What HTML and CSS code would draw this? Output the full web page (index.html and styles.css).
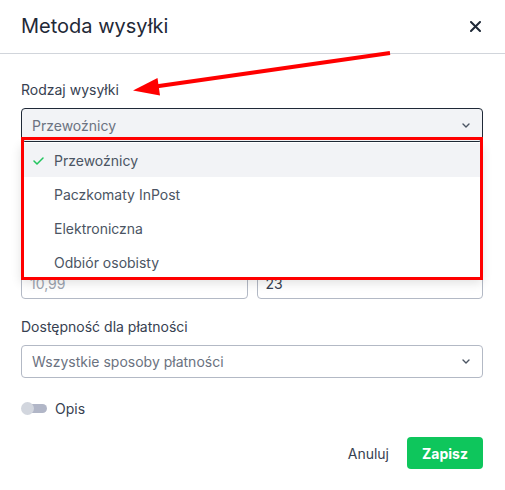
FILE: index.html
```html
<!DOCTYPE html>
<html lang="pl">
<head>
<meta charset="utf-8">
<title>Metoda wysyłki</title>
<link rel="stylesheet" href="styles.css">
</head>
<body>
<div class="modal">
  <header class="modal-header">
    <h2 class="modal-title">Metoda wysyłki</h2>
    <button class="close-btn" aria-label="Zamknij">
      <svg width="11" height="11" viewBox="0 0 11 11"><path d="M1 1 L10 10 M10 1 L1 10" stroke="#1f2937" stroke-width="2" stroke-linecap="round"/></svg>
    </button>
  </header>

  <div class="modal-body">
    <div class="field">
      <label class="label">Rodzaj wysyłki</label>
      <div class="select-wrap">
        <div class="select select-open">
          <span>Przewoźnicy</span>
          <svg class="chevron" width="8" height="5" viewBox="0 0 8 5"><polyline points="1,1 4,4 7,1" fill="none" stroke="#4b5563" stroke-width="1.4" stroke-linecap="round" stroke-linejoin="round"/></svg>
        </div>
        <ul class="dropdown">
          <li class="option option-active">
            <svg class="check" width="11" height="8" viewBox="0 0 11 8"><polyline points="1,4 4,7 10,1" fill="none" stroke="#22c55e" stroke-width="1.5" stroke-linecap="round" stroke-linejoin="round"/></svg>
            <span>Przewoźnicy</span>
          </li>
          <li class="option"><span>Paczkomaty InPost</span></li>
          <li class="option"><span>Elektroniczna</span></li>
          <li class="option"><span>Odbiór osobisty</span></li>
        </ul>
        <div class="annot-box"></div>
      </div>
    </div>

    <div class="field covered">
      <div class="label-space"></div>
      <div class="select select-plain"></div>
    </div>

    <div class="field-row">
      <div class="field">
        <div class="label-space"></div>
        <div class="input placeholder">10,99</div>
      </div>
      <div class="field">
        <div class="label-space"></div>
        <div class="input">23</div>
      </div>
    </div>

    <div class="field">
      <label class="label">Dostępność dla płatności</label>
      <div class="select select-plain">
        <span>Wszystkie sposoby płatności</span>
        <svg class="chevron" width="8" height="5" viewBox="0 0 8 5"><polyline points="1,1 4,4 7,1" fill="none" stroke="#4b5563" stroke-width="1.4" stroke-linecap="round" stroke-linejoin="round"/></svg>
      </div>
    </div>

    <div class="toggle-row">
      <span class="toggle"><span class="toggle-track"></span><span class="toggle-knob"></span></span>
      <span class="toggle-label">Opis</span>
    </div>
  </div>

  <footer class="modal-footer">
    <button class="btn-cancel">Anuluj</button>
    <button class="btn-save">Zapisz</button>
  </footer>

  <svg class="annot-arrow" width="505" height="490" viewBox="0 0 505 490">
    <line x1="390" y1="53" x2="152" y2="87" stroke="#ff0000" stroke-width="4"/>
    <polygon points="133,90.5 157.5,78 160,95.5" fill="#ff0000"/>
  </svg>
</div>
</body>
</html>
```

FILE: styles.css
```css
* { box-sizing: border-box; }

html, body {
  margin: 0;
  padding: 0;
  background: #ffffff;
}

body {
  font-family: Inter, "Noto Sans", "Liberation Sans", sans-serif;
  color: #374151;
  width: 505px;
  height: 490px;
  overflow: hidden;
}

.modal {
  position: relative;
  width: 505px;
  height: 490px;
}

.modal-header {
  height: 54px;
  border-bottom: 1px solid #d1d5db;
  display: flex;
  align-items: center;
  justify-content: space-between;
  padding: 0 24px 1px 21px;
}

.modal-title {
  margin: 0;
  font-size: 20px;
  font-weight: 400;
  color: #1f2937;
}

.close-btn {
  border: 0;
  background: none;
  padding: 0;
  display: flex;
  width: 11px;
  height: 11px;
}

.modal-body {
  padding: 26px 22px 0 21px;
}

.field {
  display: flex;
  flex-direction: column;
  margin-bottom: 18px;
}

.label {
  font-size: 14px;
  line-height: 20px;
  color: #374151;
  margin-bottom: 8px;
}

.label-space {
  height: 20px;
  margin-bottom: 8px;
}

.covered { visibility: hidden; }

.select-wrap {
  position: relative;
}

.select {
  height: 34px;
  border-radius: 4px;
  display: flex;
  align-items: center;
  justify-content: space-between;
  padding: 0 12px 0 10px;
  font-size: 14px;
  color: #6b7280;
}

.select-open {
  background: #f2f3f6;
  border: 1px solid #1f2937;
}

.select-plain {
  background: #ffffff;
  border: 1px solid #b3b9c5;
  height: 33px;
}

.chevron { display: block; }

.dropdown {
  position: absolute;
  top: 34px;
  left: 0;
  right: 1px;
  margin: 0;
  padding: 1px 0 0 0;
  list-style: none;
  background: #ffffff;
  box-shadow: 0 4px 10px rgba(0, 0, 0, 0.12);
  z-index: 2;
}

.option {
  height: 34px;
  display: flex;
  align-items: center;
  padding-left: 33px;
  font-size: 14px;
  color: #4b5563;
  position: relative;
}

.option-active {
  background: #f2f3f6;
}

.check {
  position: absolute;
  left: 12px;
  top: 14px;
}

.annot-box {
  position: absolute;
  top: 29px;
  left: 0;
  width: 462px;
  height: 143px;
  border: 3.5px solid #ff0000;
  z-index: 3;
}

.field-row {
  display: grid;
  grid-template-columns: 1fr 1fr;
  gap: 9px;
}

.input {
  height: 32px;
  border: 1px solid #b3b9c5;
  border-radius: 4px;
  display: flex;
  align-items: center;
  padding: 0 8px;
  font-size: 14px;
  color: #374151;
}

.input.placeholder { color: #9ca3af; }

.toggle-row {
  display: flex;
  align-items: center;
  height: 20px;
  margin-top: 20px;
}

.toggle {
  position: relative;
  width: 26px;
  height: 13px;
  margin-right: 8px;
}

.toggle-track {
  position: absolute;
  left: 6px;
  top: 2px;
  width: 20px;
  height: 9px;
  border-radius: 5px;
  background: #b1b6c7;
}

.toggle-knob {
  position: absolute;
  left: 0;
  top: 0;
  width: 13px;
  height: 13px;
  border-radius: 50%;
  background: #d2d6de;
}

.toggle-label {
  font-size: 14px;
  color: #374151;
}

.modal-footer {
  display: flex;
  justify-content: flex-end;
  align-items: center;
  gap: 18px;
  padding: 19px 22px 0 0;
}

.btn-cancel {
  border: 0;
  background: none;
  padding: 0;
  font-family: inherit;
  font-size: 14px;
  color: #374151;
}

.btn-save {
  border: 0;
  background: #0ec65c;
  color: #ffffff;
  font-family: inherit;
  font-size: 14px;
  font-weight: 700;
  width: 76px;
  height: 32px;
  border-radius: 4px;
}

.annot-arrow {
  position: absolute;
  left: 0;
  top: 0;
  pointer-events: none;
  z-index: 5;
}
```
